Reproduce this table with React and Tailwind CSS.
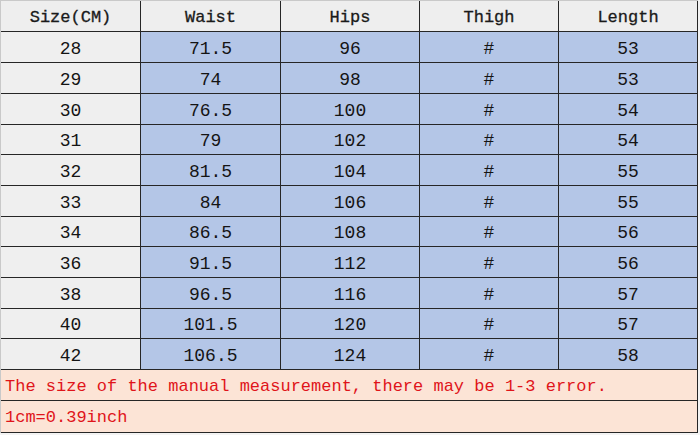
import React from "react";

const rows = [
  ["28", "71.5", "96", "#", "53"],
  ["29", "74", "98", "#", "53"],
  ["30", "76.5", "100", "#", "54"],
  ["31", "79", "102", "#", "54"],
  ["32", "81.5", "104", "#", "55"],
  ["33", "84", "106", "#", "55"],
  ["34", "86.5", "108", "#", "56"],
  ["36", "91.5", "112", "#", "56"],
  ["38", "96.5", "116", "#", "57"],
  ["40", "101.5", "120", "#", "57"],
  ["42", "106.5", "124", "#", "58"],
];

const heights = ["h-[31px]", "h-[31px]", "h-[31px]", "h-[30px]", "h-[31px]", "h-[31px]", "h-[30px]", "h-[31px]", "h-[31px]", "h-[30px]", "h-[31px]"];

const headers = ["Size(CM)", "Waist", "Hips", "Thigh", "Length"];

export default function App() {
  return (
    <div className="w-[700px] h-[435px] bg-[#f3f3f3] overflow-hidden" style={{ fontFamily: '"Liberation Mono", "DejaVu Sans Mono", monospace' }}>
      <div className="w-[698px] border-l border-t border-[#c9c9c9]">
        <div className="grid grid-cols-[140px_140px_139px_139px_139px] h-[31px] bg-[#eeeeee]">
          {headers.map((h) => (
            <div key={h} className="flex items-center justify-center pt-[3px] border-r border-b border-[#262626] text-[17px] leading-[20px] text-[#1a1a1a] [-webkit-text-stroke:0.3px_#1a1a1a]">
              {h}
            </div>
          ))}
        </div>
        {rows.map((r, i) => (
          <div key={r[0]} className={`grid grid-cols-[140px_140px_139px_139px_139px] ${heights[i]}`}>
            {r.map((c, j) => (
              <div
                key={j}
                className={`flex items-center justify-center pt-[3px] border-r border-b border-[#262626] text-[18px] leading-[20px] text-[#141414] ${j === 0 ? "bg-[#efefef]" : "bg-[#b4c6e7]"}`}
              >
                {c}
              </div>
            ))}
          </div>
        ))}
        <div className="h-[31px] flex items-center pl-[4px] pt-[3px] bg-[#fce4d6] border-r border-b border-[#262626] text-[17px] leading-[20px] text-[#e0141a]">
          The size of the manual measurement, there may be 1-3 error.
        </div>
        <div className="h-[32px] flex items-center pl-[4px] pt-[3px] bg-[#fce4d6] border-r border-b border-[#262626] text-[17px] leading-[20px] text-[#e0141a]">
          1cm=0.39inch
        </div>
      </div>
    </div>
  );
}
